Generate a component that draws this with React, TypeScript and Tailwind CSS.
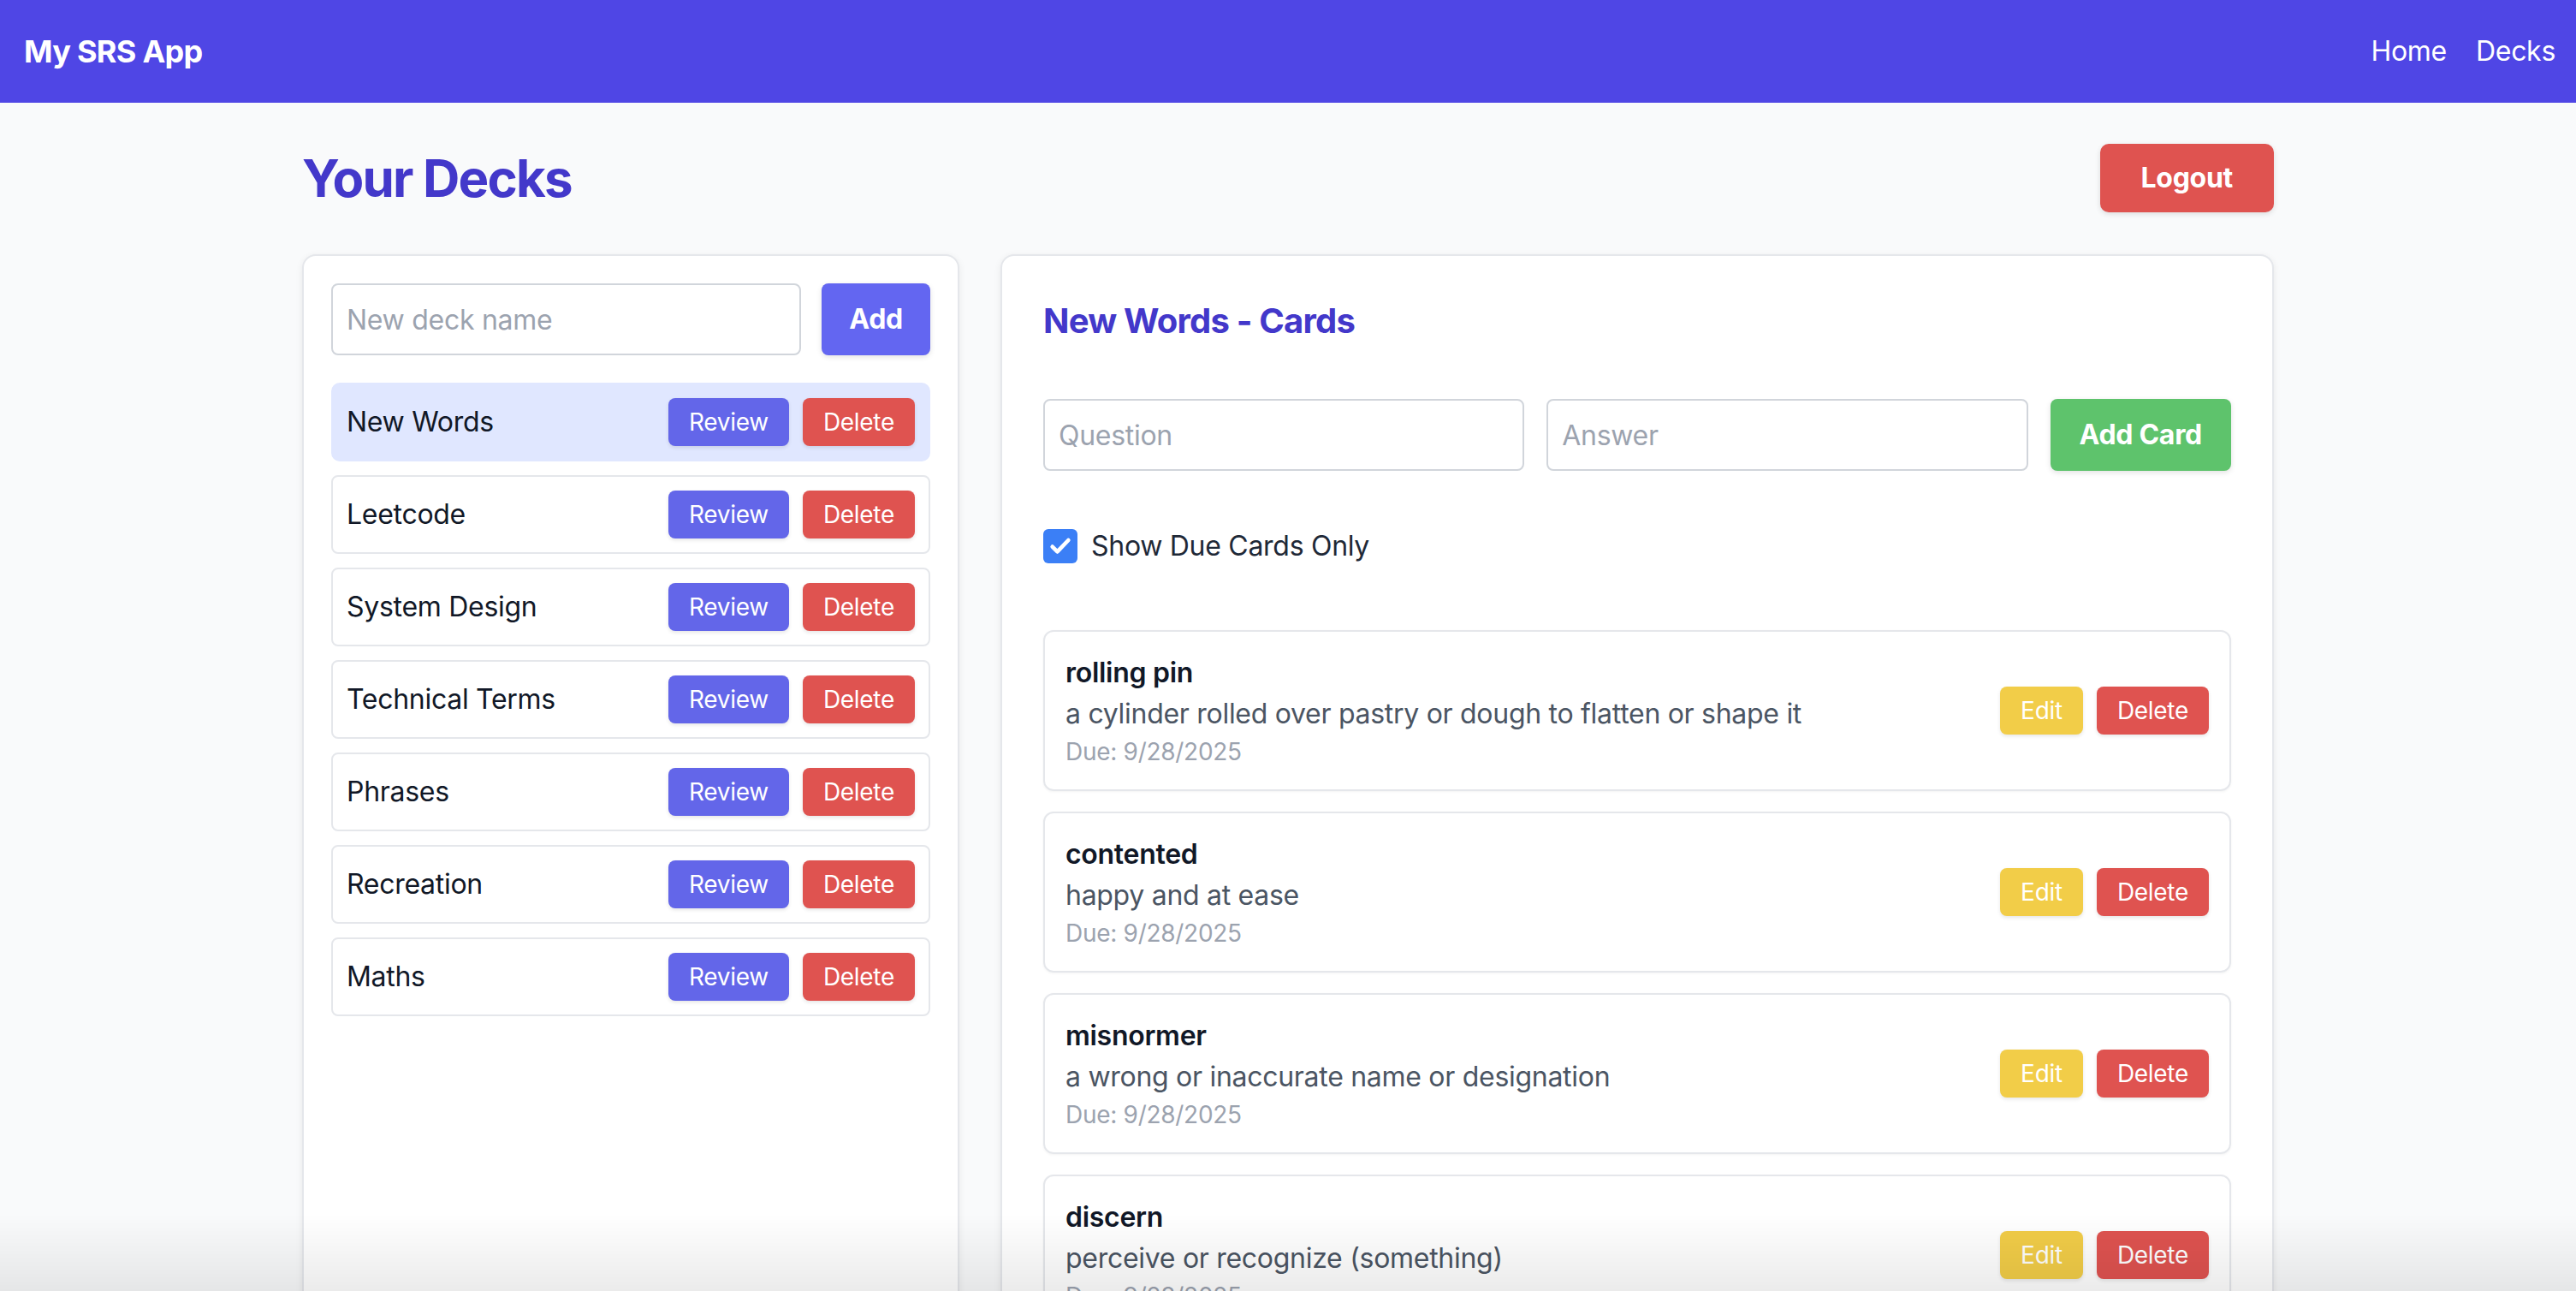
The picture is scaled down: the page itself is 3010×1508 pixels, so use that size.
import React, { useState } from "react";

const decks = [
    "New Words",
    "Leetcode",
    "System Design",
    "Technical Terms",
    "Phrases",
    "Recreation",
    "Maths",
];

const cards = [
    { q: "rolling pin", a: "a cylinder rolled over pastry or dough to flatten or shape it", due: "9/28/2025" },
    { q: "contented", a: "happy and at ease", due: "9/28/2025" },
    { q: "misnormer", a: "a wrong or inaccurate name or designation", due: "9/28/2025" },
    { q: "discern", a: "perceive or recognize (something)", due: "9/28/2025" },
    { q: "ubiquitous", a: "present, appearing, or found everywhere", due: "9/28/2025" },
];

const Navbar = () => (
    <nav className="h-[120px] bg-[#4f46e5] flex items-center justify-between pl-[28px] pr-[24px] text-white">
        <span className="text-[36px] font-bold tracking-[-0.02em]">My SRS App</span>
        <div className="flex items-center gap-[34px] text-[32px]">
            <a>Home</a>
            <a>Decks</a>
        </div>
    </nav>
);

const DeckList = () => {
    const [selected] = useState("New Words");

    return (
        <div className="w-[768px] shrink-0 bg-white border-2 border-[#e5e7eb] rounded-[16px] p-[32px] shadow-[0_2px_8px_rgba(0,0,0,0.07)]">
            <div className="flex gap-[24px] mb-[32px]">
                <input
                    type="text"
                    placeholder="New deck name"
                    className="flex-1 min-w-0 h-[84px] border-2 border-[#d1d5db] rounded-[8px] px-[16px] text-[32px] text-[#111827] placeholder:text-[#9ca3af] focus:outline-none"
                />
                <button className="h-[84px] px-[32px] bg-[#6366f1] text-white text-[32px] font-bold rounded-[8px] shadow-[0_2px_6px_rgba(0,0,0,0.12)]">
                    Add
                </button>
            </div>

            <div className="flex flex-col gap-[16px]">
                {decks.map((d) => (
                    <div
                        key={d}
                        className={
                            d === selected
                                ? "flex items-center justify-between p-[16px] border-2 border-[#e0e7ff] bg-[#e0e7ff] rounded-[10px]"
                                : "flex items-center justify-between p-[16px] border-2 border-[#e5e7eb] bg-white rounded-[8px]"
                        }
                    >
                        <span className="text-[32px] text-[#111827]">{d}</span>
                        <div className="flex gap-[16px]">
                            <button className="h-[56px] px-[24px] bg-[#6366e9] text-white text-[28px] rounded-[8px] shadow-[0_2px_4px_rgba(0,0,0,0.1)]">
                                Review
                            </button>
                            <button className="h-[56px] px-[24px] bg-[#df5350] text-white text-[28px] rounded-[8px] shadow-[0_2px_4px_rgba(0,0,0,0.1)]">
                                Delete
                            </button>
                        </div>
                    </div>
                ))}
            </div>
        </div>
    );
};

const CardPanel = () => {
    const [dueOnly, setDueOnly] = useState(true);

    return (
        <div className="flex-1 bg-white border-2 border-[#e5e7eb] rounded-[16px] p-[48px] shadow-[0_2px_8px_rgba(0,0,0,0.07)]">
            <h2 className="text-[40px] leading-[56px] font-bold text-[#4338ca] tracking-[-0.02em] mb-[63px]">New Words - Cards</h2>

            <div className="flex gap-[26px]">
                <input
                    type="text"
                    placeholder="Question"
                    className="flex-1 min-w-0 h-[84px] border-2 border-[#d1d5db] rounded-[8px] px-[16px] text-[32px] placeholder:text-[#9ca3af] focus:outline-none"
                />
                <input
                    type="text"
                    placeholder="Answer"
                    className="flex-1 min-w-0 h-[84px] border-2 border-[#d1d5db] rounded-[8px] px-[16px] text-[32px] placeholder:text-[#9ca3af] focus:outline-none"
                />
                <button className="h-[84px] px-[34px] bg-[#5ec36c] text-white text-[32px] font-bold rounded-[8px] shadow-[0_2px_6px_rgba(0,0,0,0.12)]">
                    Add Card
                </button>
            </div>

            <label
                className="mt-[64px] h-[48px] flex items-center gap-[16px] text-[32px] text-[#1f2937] cursor-pointer w-fit"
                onClick={() => setDueOnly(!dueOnly)}
            >
                <span
                    className={
                        dueOnly
                            ? "w-[40px] h-[40px] rounded-[6px] bg-[#3b7ff6] flex items-center justify-center"
                            : "w-[40px] h-[40px] rounded-[6px] border-2 border-[#9ca3af] bg-white"
                    }
                >
                    {dueOnly && (
                        <svg width="28" height="28" viewBox="0 0 24 24" fill="none">
                            <path d="M4 12.5l5 5L20 6" stroke="white" strokeWidth="4" strokeLinecap="round" strokeLinejoin="round" />
                        </svg>
                    )}
                </span>
                Show Due Cards Only
            </label>

            <div className="mt-[74px] flex flex-col gap-[24px]">
                {cards.map((c) => (
                    <div
                        key={c.q}
                        className="flex items-center justify-between border-2 border-[#e5e7eb] rounded-[12px] p-[24px] shadow-[0_1px_3px_rgba(0,0,0,0.05)]"
                    >
                        <div className="flex flex-col">
                            <span className="text-[32px] leading-[48px] font-semibold text-[#111827]">{c.q}</span>
                            <span className="text-[32px] leading-[48px] text-[#4b5563]">{c.a}</span>
                            <span className="text-[28px] leading-[40px] text-[#9ca3af]">Due: {c.due}</span>
                        </div>
                        <div className="flex gap-[16px]">
                            <button className="h-[56px] px-[24px] bg-[#f2cd48] text-white text-[28px] rounded-[8px] shadow-[0_2px_4px_rgba(0,0,0,0.1)]">
                                Edit
                            </button>
                            <button className="h-[56px] px-[24px] bg-[#df5350] text-white text-[28px] rounded-[8px] shadow-[0_2px_4px_rgba(0,0,0,0.1)]">
                                Delete
                            </button>
                        </div>
                    </div>
                ))}
            </div>
        </div>
    );
};

export default function App() {
    return (
        <div className="min-h-screen bg-[#f9fafb] font-[Inter,'Noto_Sans',sans-serif] tracking-[-0.018em]">
            <Navbar />

            <main className="max-w-[2304px] mx-auto pt-[48px] pb-[64px]">
                <div className="h-[80px] flex items-center justify-between mb-[49px]">
                    <h1 className="text-[60px] font-bold text-[#4338ca] tracking-[-0.03em]">Your Decks</h1>
                    <button className="h-[80px] px-[48px] bg-[#df5350] text-white text-[32px] font-bold rounded-[10px] shadow-[0_2px_6px_rgba(0,0,0,0.12)]">
                        Logout
                    </button>
                </div>

                <div className="flex gap-[48px] items-stretch">
                    <DeckList />
                    <CardPanel />
                </div>
            </main>

            {/* bottom fade of the window edge */}
            <div className="fixed bottom-0 inset-x-0 h-[90px] pointer-events-none bg-linear-to-b from-transparent to-[rgba(0,0,0,0.08)]" />
        </div>
    );
}
